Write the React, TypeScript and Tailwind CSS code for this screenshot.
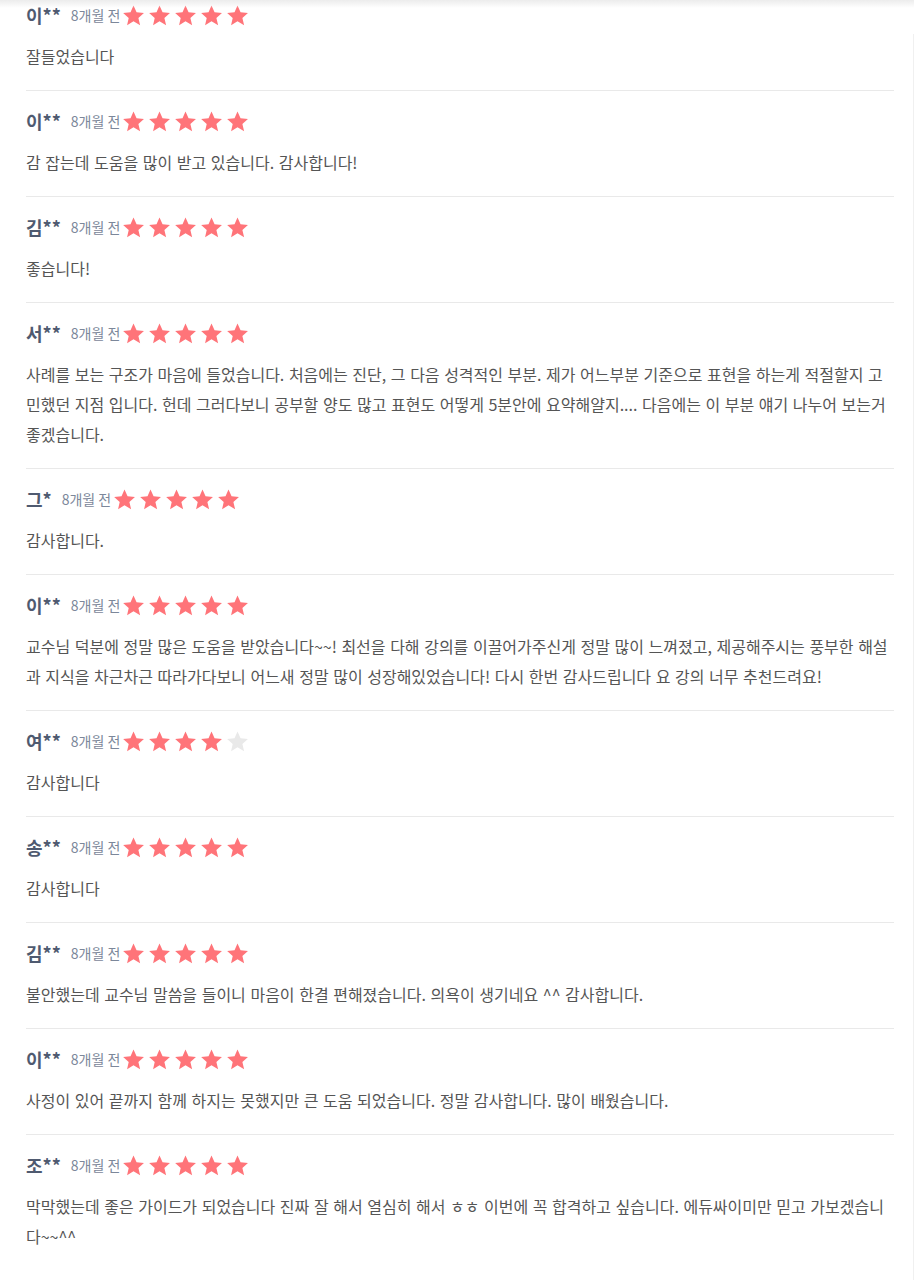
import { Fragment } from 'react'

type Review = {
  name: string
  when: string
  rating: number
  body: string
}

const REVIEWS: Review[] = [
  { name: '이**', when: '8개월 전', rating: 5, body: '잘들었습니다' },
  { name: '이**', when: '8개월 전', rating: 5, body: '감 잡는데 도움을 많이 받고 있습니다. 감사합니다!' },
  { name: '김**', when: '8개월 전', rating: 5, body: '좋습니다!' },
  {
    name: '서**',
    when: '8개월 전',
    rating: 5,
    body: '사례를 보는 구조가 마음에 들었습니다. 처음에는 진단, 그 다음 성격적인 부분. 제가 어느부분 기준으로 표현을 하는게 적절할지 고민했던 지점 입니다. 헌데 그러다보니 공부할 양도 많고 표현도 어떻게 5분안에 요약해얄지.... 다음에는 이 부분 얘기 나누어 보는거 좋겠습니다.',
  },
  { name: '그*', when: '8개월 전', rating: 5, body: '감사합니다.' },
  {
    name: '이**',
    when: '8개월 전',
    rating: 5,
    body: '교수님 덕분에 정말 많은 도움을 받았습니다~~! 최선을 다해 강의를 이끌어가주신게 정말 많이 느껴졌고, 제공해주시는 풍부한 해설과 지식을 차근차근 따라가다보니 어느새 정말 많이 성장해있었습니다! 다시 한번 감사드립니다 요 강의 너무 추천드려요!',
  },
  { name: '여**', when: '8개월 전', rating: 4, body: '감사합니다' },
  { name: '송**', when: '8개월 전', rating: 5, body: '감사합니다' },
  { name: '김**', when: '8개월 전', rating: 5, body: '불안했는데 교수님 말씀을 들이니 마음이 한결 편해졌습니다. 의욕이 생기네요 ^^ 감사합니다.' },
  { name: '이**', when: '8개월 전', rating: 5, body: '사정이 있어 끝까지 함께 하지는 못했지만 큰 도움 되었습니다. 정말 감사합니다. 많이 배웠습니다.' },
  {
    name: '조**',
    when: '8개월 전',
    rating: 5,
    body: '막막했는데 좋은 가이드가 되었습니다 진짜 잘 해서 열심히 해서 ㅎㅎ 이번에 꼭 합격하고 싶습니다. 에듀싸이미만 믿고 가보겠습니다~~^^',
  },
]

function Star({ filled }: { filled: boolean }) {
  return (
    <svg viewBox="0 0 24 24" className={filled ? 'h-[23px] w-[23px] fill-[#ff7479]' : 'h-[23px] w-[23px] fill-[#e9e9e9]'}>
      <path d="M12 1.6l3.2 7.1 7.7.7-5.8 5.1 1.8 7.6L12 18.1l-6.7 4 1.7-7.6-5.8-5.1 7.7-.7z" />
    </svg>
  )
}

function ReviewItem({ review, first }: { review: Review; first: boolean }) {
  return (
    <div className={first ? 'pb-[19px]' : 'pt-[16px] pb-[19px]'}>
      <div className="flex h-7 items-center">
        <span className="text-[18px] font-bold text-[#4f5a70]">{review.name}</span>
        <span className="ml-[10px] text-[14px] text-[#7c879a]">{review.when}</span>
        <div className="ml-[2px] flex gap-[3px]">
          {[0, 1, 2, 3, 4].map((i) => (
            <Star key={i} filled={i < review.rating} />
          ))}
        </div>
      </div>
      <p className="mt-[12px] text-[16px] leading-[30px] text-[#555555] [word-spacing:1px]">{review.body}</p>
    </div>
  )
}

export default function App() {
  return (
    <div
      className="relative min-h-[1280px] bg-white pl-[26px] pr-[20px]"
      style={{ fontFamily: '"Noto Sans CJK KR", "Noto Sans", sans-serif' }}
    >
      <div className="pointer-events-none absolute inset-x-0 top-0 h-[8px] bg-gradient-to-b from-[#ececec] to-white/0" />
      <div className="pointer-events-none absolute right-0 top-[34px] bottom-0 w-px bg-[#f0f0f0]" />
      <div className="pt-px">
        {REVIEWS.map((review, i) => (
          <Fragment key={i}>
            {i > 0 && <div className="h-px bg-[#e9e9e9]" />}
            <ReviewItem review={review} first={i === 0} />
          </Fragment>
        ))}
      </div>
    </div>
  )
}
